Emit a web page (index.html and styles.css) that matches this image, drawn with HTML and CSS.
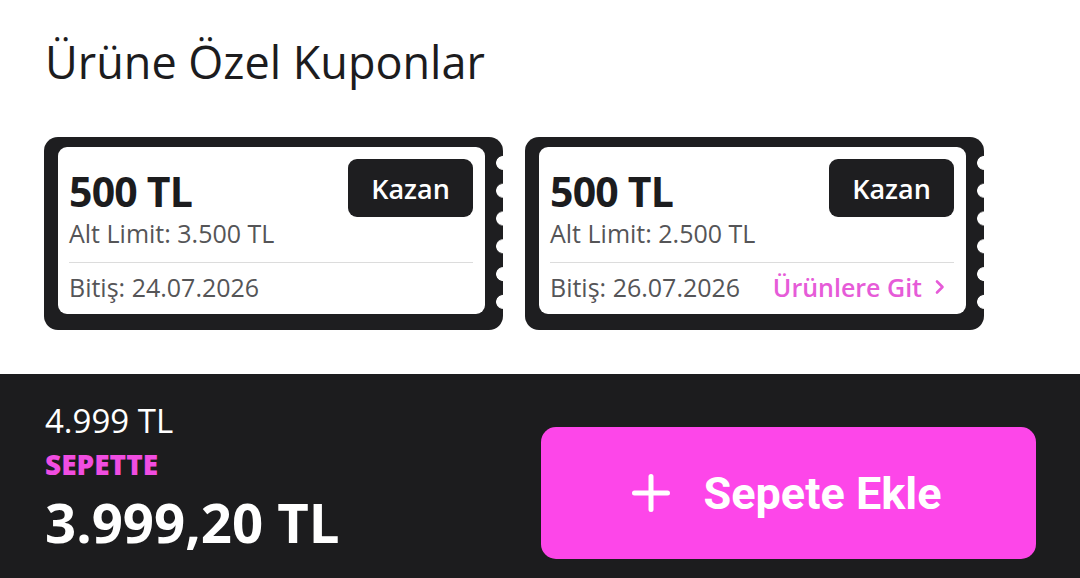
FILE: index.html
```html
<!DOCTYPE html>
<html lang="tr">
  <head>
    <meta charset="utf-8" />
    <meta name="viewport" content="width=device-width" />
    <title>Ürüne Özel Kuponlar</title>
    <link rel="stylesheet" href="styles.css">
  </head>

  <body>
    <section class="coupons">
      <h2 class="coupons-title">Ürüne Özel Kuponlar</h2>

      <div class="coupon-list">
        <div class="coupon">
          <div class="coupon-body">
            <div class="coupon-top">
              <div>
                <div class="coupon-amount">500 TL</div>
                <div class="coupon-limit">Alt Limit: 3.500 TL</div>
              </div>
              <button class="coupon-btn">Kazan</button>
            </div>
            <div class="coupon-foot">
              <span class="coupon-date">Bitiş: 24.07.2026</span>
            </div>
          </div>
        </div>

        <div class="coupon">
          <div class="coupon-body">
            <div class="coupon-top">
              <div>
                <div class="coupon-amount">500 TL</div>
                <div class="coupon-limit">Alt Limit: 2.500 TL</div>
              </div>
              <button class="coupon-btn">Kazan</button>
            </div>
            <div class="coupon-foot">
              <span class="coupon-date">Bitiş: 26.07.2026</span>
              <a class="coupon-link" href="#">Ürünlere Git
                <svg width="11" height="16" viewBox="0 0 11 16">
                  <path d="M3 2.5 L8.5 8 L3 13.5" fill="none" stroke="currentColor" stroke-width="2.6" stroke-linecap="round" stroke-linejoin="round" />
                </svg>
              </a>
            </div>
          </div>
        </div>
      </div>
    </section>

    <div class="cart-bar">
      <div class="price">
        <div class="price-old">4.999 TL</div>
        <div class="price-label">SEPETTE</div>
        <div class="price-now">3.999,20 TL</div>
      </div>
      <button class="add-btn">
        <svg width="38" height="38" viewBox="0 0 38 38">
          <path d="M19 2.5 V35.5 M2.5 19 H35.5" stroke="#fff" stroke-width="5" stroke-linecap="round" />
        </svg>
        <span>Sepete Ekle</span>
      </button>
    </div>
  </body>
</html>
```

FILE: styles.css
```css
* {
  box-sizing: border-box;
}

body {
  margin: 0;
  background: #fff;
  font-family: "Open Sans", sans-serif;
  color: #1c1c1e;
}

.coupons {
  padding: 36px 0 0 44px;
}

.coupons-title {
  margin: 0 0 49px 1px;
  font-size: 45px;
  line-height: 52px;
  font-weight: 400;
}

.coupon-list {
  display: flex;
  gap: 22px;
}

/* ticket: dark frame with a perforated right edge */
.coupon {
  position: relative;
  width: 459px;
  height: 193px;
  padding: 10px 18px 16px 14px;
  background: #1e1e20;
  border-radius: 14px;
}

.coupon::after {
  content: "";
  position: absolute;
  top: 12px;
  right: -7px;
  width: 14px;
  height: 167px;
  background: radial-gradient(circle, #fff 6.5px, transparent 7.2px) 0 0 / 14px 27.8px repeat-y;
}

.coupon-body {
  height: 100%;
  padding: 12px 12px 0 11px;
  background: #fff;
  border-radius: 9px;
}

.coupon-top {
  display: flex;
  justify-content: space-between;
  align-items: flex-start;
  margin-bottom: 11px;
}

.coupon-amount {
  padding-top: 8px;
  font-size: 41px;
  line-height: 48px;
  font-weight: 700;
  letter-spacing: -0.8px;
  color: #1c1c1e;
}

.coupon-limit {
  font-size: 25px;
  line-height: 36px;
  color: #555557;
}

.coupon-btn {
  width: 125px;
  height: 58px;
  border: 0;
  border-radius: 9px;
  background: #1e1e20;
  color: #fff;
  font-family: "Open Sans", sans-serif;
  font-size: 27px;
  font-weight: 600;
}

.coupon-foot {
  display: flex;
  justify-content: space-between;
  align-items: center;
  padding: 6px 0 9px;
  border-top: 1px solid #dcdcdc;
  font-size: 25px;
  line-height: 36px;
}

.coupon-date {
  color: #555557;
}

.coupon-link {
  display: flex;
  align-items: center;
  gap: 12px;
  padding-right: 9px;
  color: #e65bd8;
  font-size: 25px;
  font-weight: 600;
  text-decoration: none;
}

/* bottom bar with price and add-to-cart */
.cart-bar {
  display: flex;
  justify-content: space-between;
  align-items: flex-start;
  height: 204px;
  margin-top: 44px;
  padding: 27px 44px 0 45px;
  background: #1c1c1e;
  color: #fff;
}

.price-old {
  font-size: 33px;
  line-height: 40px;
}

.price-label {
  font-size: 28px;
  line-height: 46px;
  font-weight: 800;
  color: #f04de1;
}

.price-now {
  margin-top: 5px;
  font-size: 54.5px;
  line-height: 60px;
  font-weight: 700;
}

.add-btn {
  display: flex;
  align-items: center;
  justify-content: center;
  gap: 34px;
  width: 495px;
  height: 132px;
  margin-top: 26px;
  padding-right: 10px;
  border: 0;
  border-radius: 15px;
  background: #fd46e9;
  color: #fff;
  font-family: Roboto, sans-serif;
  font-size: 45px;
  font-weight: 700;
}
```
